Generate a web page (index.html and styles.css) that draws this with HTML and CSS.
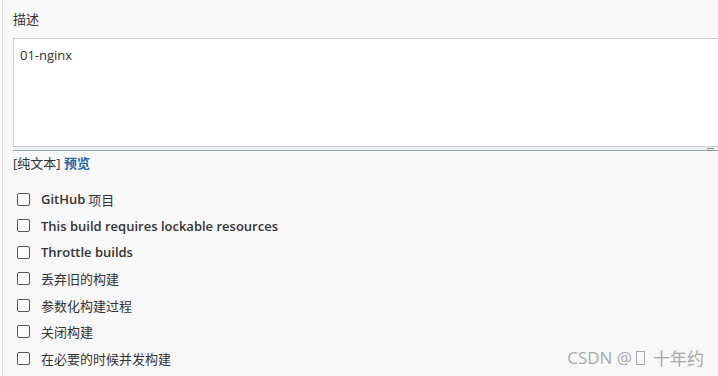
FILE: index.html
```html
<html>
	<head>
		<title>描述</title>
		<meta charset="utf-8" />
		<link rel="stylesheet" href="styles.css">
	</head>
	<body>
		<div class="page">
			<div class="label">描述</div>
			<div class="editor">
				<div class="textarea">01-nginx</div>
				<div class="handle"><span class="grip"></span></div>
			</div>
			<div class="preview">[纯文本] <a class="link">预览</a></div>
			<ul class="options">
				<li><span class="box"></span><span class="en">GitHub</span> 项目</li>
				<li><span class="box"></span><span class="en">This build requires lockable resources</span></li>
				<li><span class="box"></span><span class="en">Throttle builds</span></li>
				<li><span class="box"></span>丢弃旧的构建</li>
				<li><span class="box"></span>参数化构建过程</li>
				<li><span class="box"></span>关闭构建</li>
				<li><span class="box"></span>在必要的时候并发构建</li>
			</ul>
		</div>
		<div class="mark">CSDN @<span class="tofu"></span>十年约</div>
	</body>
</html>
```

FILE: styles.css
```css
body {
	margin: 0;
	background: #f8f8f8;
	font-family: "Open Sans", "Noto Sans CJK SC", sans-serif;
	font-size: 13px;
	color: #333;
	overflow: hidden;
}
.page {
	margin-left: 2px;
	border-left: 1px solid #dcdcdc;
	padding: 10px 0 0 10px;
	height: 376px;
	box-sizing: border-box;
}
.label {
	height: 18px;
	line-height: 18px;
}
.editor {
	margin-top: 10px;
	margin-right: -20px;
}
.textarea {
	height: 95px;
	background: #fff;
	border: 1px solid #ccc;
	padding: 7px 6px 5px;
	line-height: 18px;
}
.handle {
	height: 3px;
	background: #eef2f4;
	border-bottom: 1px solid #9aa6ab;
	position: relative;
}
.grip {
	position: absolute;
	right: 24px;
	top: 1px;
	width: 7px;
	border-top: 1px solid #888;
	border-bottom: 1px solid #888;
	height: 1px;
}
.preview {
	margin-top: 2px;
	height: 20px;
	line-height: 20px;
}
.link {
	color: #2468ac;
	font-weight: 600;
}
.options {
	list-style: none;
	margin: 13px 0 0 0;
	padding: 0;
}
.options li {
	height: 26.5px;
	display: flex;
	align-items: center;
}
.en {
	font-weight: 600;
	margin-right: 3px;
}
.box {
	width: 11px;
	height: 11px;
	border: 1px solid #555;
	border-radius: 2px;
	background: #fff;
	margin: 0 11px 0 4px;
}
.mark {
	position: absolute;
	right: 14px;
	bottom: 6px;
	font-size: 17px;
	color: #a8a8a8;
	display: flex;
	align-items: center;
}
.tofu {
	display: inline-block;
	width: 7px;
	height: 12px;
	border: 1px solid #a8a8a8;
	margin: 0 8px 0 4px;
}
```
